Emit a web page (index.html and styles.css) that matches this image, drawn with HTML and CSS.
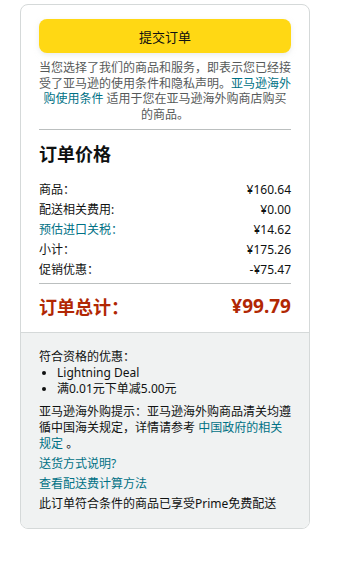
FILE: index.html
```html
<!DOCTYPE html>
<html lang="zh-CN">
<head>
<meta charset="utf-8">
<link rel="stylesheet" href="styles.css">
</head>
<body>
<div class="card">
  <div class="main">
    <button class="submit">提交订单</button>
    <p class="legal">当您选择了我们的商品和服务，即表示您已经接受了亚马逊的<a class="plain">使用条件</a>和<a class="plain">隐私声明</a>。<a class="link">亚马逊海外购使用条件</a> 适用于您在亚马逊海外购商店购买的商品。</p>
    <hr class="rule">
    <h2 class="title">订单价格</h2>
    <div class="rows">
      <div class="row"><span>商品：</span><span>¥160.64</span></div>
      <div class="row"><span>配送相关费用:</span><span>¥0.00</span></div>
      <div class="row"><span class="link">预估进口关税：</span><span>¥14.62</span></div>
      <div class="row"><span>小计：</span><span>¥175.26</span></div>
      <div class="row"><span>促销优惠：</span><span>-¥75.47</span></div>
    </div>
    <hr class="rule rule-tight">
    <div class="total"><span class="total-label">订单总计：</span><span class="total-value">¥99.79</span></div>
  </div>
  <div class="extra">
    <div class="promo-title">符合资格的优惠：</div>
    <ul class="promos">
      <li>Lightning Deal</li>
      <li>满0.01元下单减5.00元</li>
    </ul>
    <p class="note">亚马逊海外购提示：亚马逊海外购商品清关均遵循中国海关规定，详情请参考 <a class="link">中国政府的相关规定</a> 。</p>
    <p class="line"><a class="link">送货方式说明?</a></p>
    <p class="line"><a class="link">查看配送费计算方法</a></p>
    <p class="line">此订单符合条件的商品已享受Prime免费配送</p>
  </div>
</div>
</body>
</html>
```
FILE: styles.css
```css
* { box-sizing: border-box; }
html, body { margin: 0; padding: 0; background: #fff; }
body {
  padding: 4px 0 0 20px;
  font-family: "Noto Sans", "Noto Sans CJK SC", sans-serif;
  color: #0f1111;
  font-size: 12px;
}
.card {
  width: 290px;
  border: 1px solid #d5d9d9;
  border-radius: 8px;
  overflow: hidden;
}
.main {
  padding: 14px 18px 13px;
}
.submit {
  display: block;
  width: 100%;
  height: 34px;
  border: 0;
  border-radius: 8px;
  background: #ffd814;
  font-family: inherit;
  font-size: 13px;
  color: #0f1111;
  padding: 0;
  box-shadow: 0 2px 5px rgba(213,217,217,0.5);
}
.legal {
  margin: 7px -1px 0;
  text-align: center;
  font-size: 12px;
  line-height: 15.5px;
  color: #565959;
}
.plain { color: #565959; }
.link { color: #007185; }
.rule {
  border: 0;
  border-top: 1px solid #bbbfbf;
  margin: 7px 0 0;
  height: 0;
}
.title {
  margin: 12px 0 14px;
  font-size: 18px;
  line-height: 24px;
  font-weight: 700;
}
.rows { display: flex; flex-direction: column; }
.row {
  display: flex;
  justify-content: space-between;
  line-height: 20px;
  font-size: 12px;
}
.rule-tight { margin-top: 3px; }
.total {
  display: flex;
  justify-content: space-between;
  align-items: center;
  margin-top: 9px;
  color: #b12704;
  font-weight: 700;
  height: 26px;
}
.total-label { font-size: 18px; }
.total-value { font-size: 19px; }
.extra {
  background: #f0f2f2;
  border-top: 1px solid #d5d9d9;
  padding: 16px 18px 16px;
  font-size: 12px;
  line-height: 16px;
}
.promo-title { line-height: 16px; }
.promos {
  margin: 0;
  padding: 0 0 0 18px;
  line-height: 15.5px;
}
.note { margin: 8px 0 0; line-height: 16px; }
.line { margin: 4px 0 0; line-height: 16px; }
```
